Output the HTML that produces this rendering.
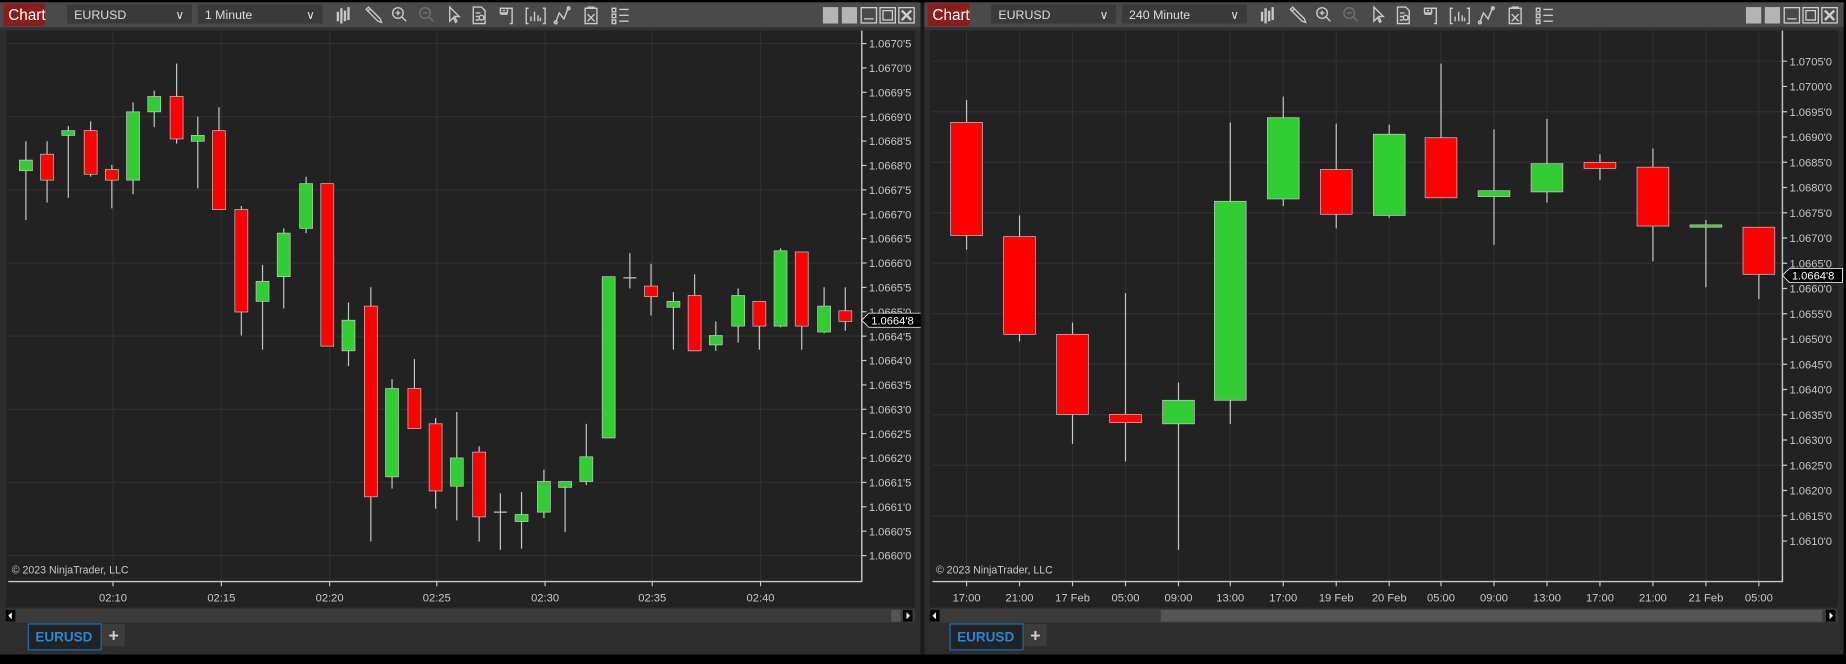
<!DOCTYPE html>
<html><head><meta charset="utf-8">
<style>
html,body{margin:0;padding:0;background:#000;overflow:hidden;width:1846px;height:658px}
#w{position:absolute;left:0;top:0;width:1568px;height:559px;transform:scale(1.17730);transform-origin:0 0}
svg text{font-family:"Liberation Sans",sans-serif}
</style></head><body>
<div id="w"><svg id="s" width="1568" height="559" viewBox="0 0 1568 559" xmlns="http://www.w3.org/2000/svg"></svg></div>
<script>
var S='';
function R(x,y,w,h,f,ex){S+='<rect x="'+x+'" y="'+y+'" width="'+w+'" height="'+h+'" fill="'+f+'" '+(ex||'')+'/>';}
function L(x1,y1,x2,y2,c,w){S+='<line x1="'+x1+'" y1="'+y1+'" x2="'+x2+'" y2="'+y2+'" stroke="'+c+'" stroke-width="'+(w||1)+'"/>';}
function T(x,y,t,sz,c,ex){S+='<text x="'+x+'" y="'+y+'" font-size="'+sz+'" fill="'+c+'" '+(ex||'')+'>'+t+'</text>';}
function icons(o){
 var g='<g fill="none" stroke="#c8c8c8" stroke-width="1.2" transform="translate('+o+',0)">';
 // bars
 g+='<path d="M287 10v8M290 7v13M293 9v9M296 6v11" stroke-width="2"/>';
 // pencil
 g+='<path d="M311 8l10 10 3 1-1-3-10-10z M312 10l2-2"/>';
 // zoom in
 g+='<circle cx="338" cy="11" r="4.5"/><path d="M341 14l4 4M336 11h4M338 9v4"/>';
 g+='<g stroke="#707070"><circle cx="361" cy="11" r="4.5"/><path d="M364 14l4 4M359 11h4"/></g>';
 // arrow
 g+='<path d="M382 6v12l3-3 2 4 1-1-2-4h4z"/>';
 // doc
 g+='<path d="M402 6h7l3 3v11h-10z M404 11h4M404 14h3M404 17h3"/><circle cx="409" cy="15" r="2"/>';
 // bracket
 g+='<path d="M425 7h6v4h-6zM425 12h6M431 7h4v13h-2M427 9h2"/>';
 g+='<path d="M449 7h-2v13h2M461 7h2v13h-2M451 18v-4M454 18v-8M457 18v-5M459 18v-3"/>';
 // curve
 g+='<path d="M472 19l3-8 4 5 4-10"/><circle cx="472" cy="19" r="1.2"/><circle cx="483" cy="7" r="1.2"/>';
 g+='<path d="M497 7h10v13h-10z M499 6h6M499 12l6 6M505 12l-6 6"/>';
 g+='<path d="M520 7h3v3h-3zM520 12h3v3h-3zM520 17h3v3h-3zM526 8h8M526 13h8M526 18h8"/>';
 g+='</g>';S+=g;
}
function winbtns(x){
 R(x,6,13,14,'#b4b4b4');R(x+16,6,13,14,'#b4b4b4');
 S+='<g fill="none" stroke="#d0d0d0" stroke-width="1.1"><rect x="'+(x+32.5)+'" y="6.5" width="13" height="13"/><path d="M'+(x+35)+' 16h8"/>'+
 '<rect x="'+(x+48.5)+'" y="6.5" width="13" height="13"/><rect x="'+(x+51)+'" y="9" width="8" height="8"/>'+
 '<rect x="'+(x+64.5)+'" y="6.5" width="13" height="13"/><path d="M'+(x+67)+' 9l8 8M'+(x+75)+' 9l-8 8" stroke-width="2"/></g>';
}
function panel(o,w,sym,intv,ax,times,labs,y0,step,gridEvery,cand,cw,mark,tabX,thumb){
 R(o,2,w,554,'#2d2d2d');
 R(o,2,w,21,'#4a4a4a');
 R(o,23,w,2,'#343434');
 R(o+3,3,35,19,'#8e1b1b');T(o+7,17,'Chart',13,'#fff');
 R(o+57,4,106,16,'#3a3a3a');T(o+63,16,sym,10.5,'#dcdcdc');T(o+149,16,'&#8744;',10,'#dcdcdc');
 R(o+168,4,106,16,'#3a3a3a');T(o+174,16,intv,10.5,'#dcdcdc');T(o+260,16,'&#8744;',10,'#dcdcdc');
 icons(o);winbtns(o+w-83);
 // chart area
 R(o+5,26,w-10,490,'#222222');
 var px0=o+7;
 for(var i=0;i<labs.length;i++){if(i%gridEvery==0){var yy=y0+i*step;L(px0,yy,ax,yy,'#303030');}}
 times.forEach(function(t){L(t[0],26,t[0],494,'#303030');});
 // candles
 cand.forEach(function(c){var x=c[0],col=c[1]=='g'?'#32cd32':(c[1]=='r'?'#ff0000':'#c8c8c8');
  L(x,c[4],x,c[5],'#c8c8c8',1);
  if(c[1]=='d'){L(x-cw/2,c[2],x+cw/2,c[2],'#c8c8c8',1);}
  else{var h=Math.max(c[3]-c[2],1.5);R(x-cw/2,c[2],cw,h,col,'stroke="#c8c8c8" stroke-width="0.6"');}
 });
 // axes
 L(ax,26,ax,494.5,'#c8c8c8',1.2);L(px0,494,ax,494,'#c8c8c8',1.2);
 for(var i=0;i<labs.length;i++){var yy=y0+i*step;L(ax,yy,ax+4,yy,'#c8c8c8');T(ax+6,yy+3.5,labs[i],9.5,'#c8c8c8');}
 times.forEach(function(t){L(t[0],494,t[0],498,'#c8c8c8');T(t[0],511,t[1],9.5,'#c8c8c8','text-anchor="middle"');});
 // marker
 S+='<path d="M'+ax+' '+mark+'l6 -6h45v12h-45z" fill="#000" stroke="#e0e0e0" stroke-width="0.8"/>';
 T(ax+8,mark+3.5,"1.0664'8",9.5,'#fff');
 T(o+10,487,'&#169; 2023 NinjaTrader, LLC',9,'#c8c8c8');
 // scrollbar
 R(o+5,517,w-10,12,'#3b3b3b');
 R(o+5,518,8,10,'#000');S+='<path d="M'+(o+10)+' 520l-3 3 3 3z" fill="#fff"/>';
 R(o+w-15,518,8,10,'#000');S+='<path d="M'+(o+w-12)+' 520l3 3-3 3z" fill="#fff"/>';
 R(thumb[0],518,thumb[1],10,'#555');
 // tab
 R(o+tabX,530,62,22,'#222',' stroke="#1e6fb4" stroke-width="1"');
 T(o+tabX+6,545,'EURUSD',11.5,'#2b86d6','font-weight="bold"');
 R(o+tabX+63,530,19,19,'#3c3c3c');T(o+tabX+72.5,545,'+',15,'#d0d0d0','text-anchor="middle" font-weight="bold"');
}
var labsL=[];for(var i=0;i<22;i++){var v=1.06705-i*0.00005;var s=v.toFixed(5);labsL.push(s.slice(0,6)+"'"+s.slice(6));}
var labsR=[];for(var i=0;i<20;i++){var v=1.0705-i*0.0005;var s=v.toFixed(5);labsR.push(s.slice(0,6)+"'"+s.slice(6));}
var cL=[[22,'g',136,145,120,187],[40,'r',131,153,120,172],[58,'g',111,115,107,168],[77,'r',111,148,103,150],[95,'r',144,153,140,177],[113,'g',95,153,87,165],[131,'g',82,95,77,108],[150,'r',82,118,54,122],[168,'g',115,120,99,160],[186,'r',111,178,91,178],[205,'r',178,265,175,285],[223,'g',239,256,225,297],[241,'g',198,235,194,262],[260,'g',156,194,150,198],[278,'r',156,294,156,294],[296,'g',272,298,257,311],[315,'r',260,422,244,460],[333,'g',330,405,322,415],[352,'r',330,364,305,364],[370,'r',360,417,355,432],[388,'g',389,413,350,442],[407,'r',384,439,379,460],[425,'d',435,435,419,467],[443,'g',437,443,418,466],[462,'g',409,435,399,440],[480,'g',409,414,409,452],[498,'g',388,409,360,412],[517,'g',235,372,235,372],[535,'d',236,236,215,245],[553,'r',243,252,224,268],[572,'g',256,261,248,297],[590,'r',251,298,233,298],[608,'g',285,293,273,298],[627,'g',251,277,245,291],[645,'r',256,277,256,297],[663,'g',213,277,211,278],[681,'r',214,277,214,297],[700,'g',260,282,244,283],[718,'r',264,273,244,281]];
var cR=[[821,'r',104,200,85,212],[866,'r',201,284,183,290],[911,'r',284,352,274,377],[956,'r',352,359,249,392],[1001,'g',340,360,325,467],[1045,'g',171,340,104,360],[1090,'g',100,169,82,175],[1135,'r',144,182,105,194],[1180,'g',114,183,106,185],[1224,'r',117,168,54,168],[1269,'g',162,167,110,208],[1314,'g',139,163,101,172],[1359,'r',138,143,131,153],[1404,'r',142,192,126,222],[1449,'g',191,193,187,244],[1494,'r',193,233,193,254]];
var tL=[[96,'02:10'],[188,'02:15'],[280,'02:20'],[371,'02:25'],[463,'02:30'],[554,'02:35'],[646,'02:40']];
var tR=[[821,'17:00'],[866,'21:00'],[911,'17 Feb'],[956,'05:00'],[1001,'09:00'],[1045,'13:00'],[1090,'17:00'],[1135,'19 Feb'],[1180,'20 Feb'],[1224,'05:00'],[1269,'09:00'],[1314,'13:00'],[1359,'17:00'],[1404,'21:00'],[1449,'21 Feb'],[1494,'05:00']];
panel(0,782,'EURUSD','1 Minute',732,tL,labsL,37,20.71,3,cL,11,272,24,[757,8]);
panel(785,781,'EURUSD','240 Minute',1514,tR,labsR,52,21.45,2,cR,27,234,22,[986,562]);
R(782,2,3,554,'#1a1a1a');
R(0,556,1568,3,'#000');
document.getElementById('s').innerHTML=S;
</script>
</body></html>
